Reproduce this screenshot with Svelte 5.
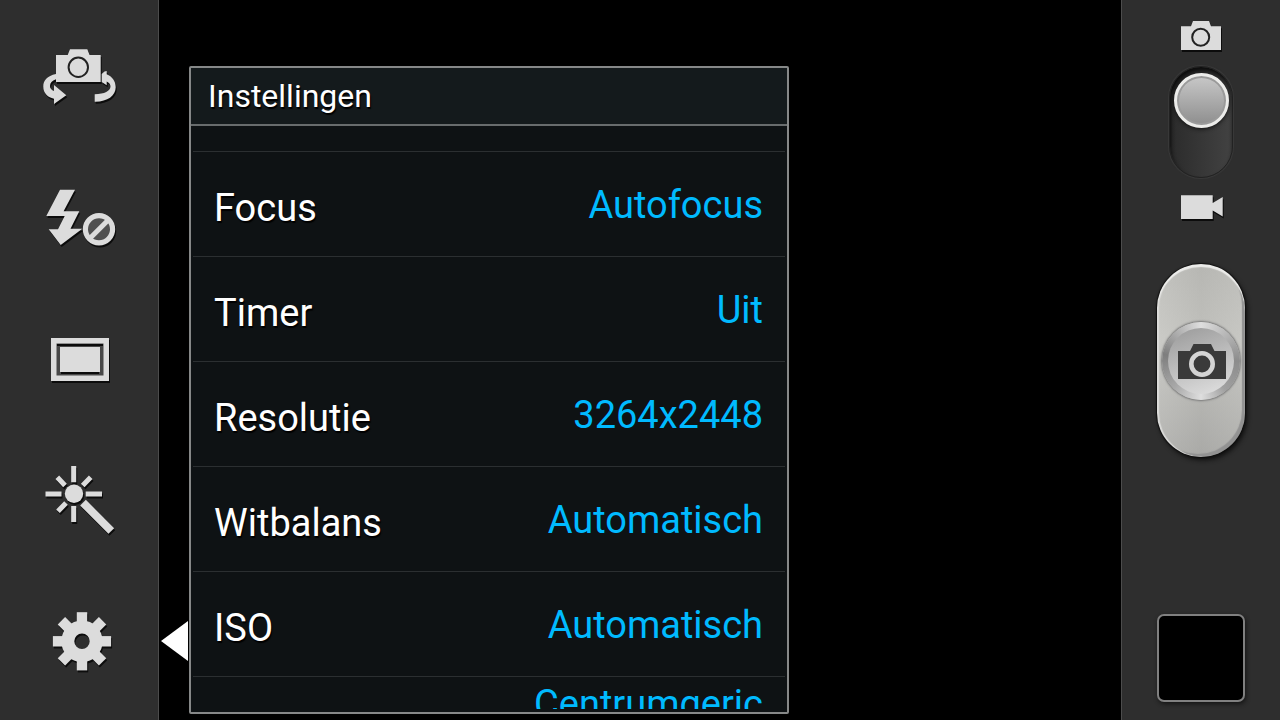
<script lang="ts">
  interface Setting {
    label: string
    value: string
  }

  const settings: Setting[] = [
    { label: 'Focus', value: 'Autofocus' },
    { label: 'Timer', value: 'Uit' },
    { label: 'Resolutie', value: '3264x2448' },
    { label: 'Witbalans', value: 'Automatisch' },
    { label: 'ISO', value: 'Automatisch' }
  ]

  const teeth = [0, 45, 90, 135, 180, 225, 270, 315]

  let video = $state(false)
</script>

<div class="camera">
  <nav class="toolbar">
    <!-- Switch camera -->
    <button class="tool">
      <svg class="icon" viewBox="0 0 80 80">
        <path d="M17 37C8 39 4.3 43.5 4.3 49.5C4.3 56.5 9 60.5 15 61.7V67L27.3 58.3L15 48V54C12.5 53 11 51.5 11 49C11 46 13 43.5 17 42.3Z" />
        <path d="M62.7 37L65.5 34.5L67.7 34V37.3C73 39.5 76.7 44 76.7 50.3C76.7 59 68 65 55.7 64.7V57.3C65.5 57 71.5 54 71.5 49.5C71.5 47.3 70 45.5 67.7 44.5V48.3L62.7 45Z" />
        <path d="M17 18H28.7L31 12.3H48.3L50.6 18H61.7V45H17Z" />
        <circle class="lens" cx="39.3" cy="30.3" r="9.7" />
      </svg>
    </button>

    <!-- Flash off -->
    <button class="tool">
      <svg class="icon" viewBox="0 0 80 80">
        <path d="M21 11.7H36L24.6 33.3H40.3L31.5 50.7H43.3L21.7 67L9.7 51.3H19L25.7 38H7.3Z" />
        <circle cx="60" cy="51.3" r="13.6" fill="#505050" stroke="#dcdcdc" stroke-width="5.2" />
        <path d="M51 60.3L69 42.3" stroke="#dcdcdc" stroke-width="5" />
      </svg>
    </button>

    <!-- Shooting mode -->
    <button class="tool">
      <svg class="icon" viewBox="0 0 80 80">
        <rect x="17" y="23" width="48" height="33" fill="#484848" />
        <path d="M18 25H64M22 53H60" stroke="#0c0c0c" stroke-width="2" />
        <path fill-rule="evenodd" d="M12 18H70V61H12ZM17.5 23.5V55.5H64.5V23.5Z" />
        <rect x="21" y="27" width="40" height="25" />
      </svg>
    </button>

    <!-- Effects -->
    <button class="tool">
      <svg class="icon" viewBox="0 0 80 80">
        <circle cx="35" cy="31.7" r="9.2" />
        <g stroke="#dcdcdc" stroke-width="5">
          <path d="M34.7 4V20.3M34.7 44V60M6.5 32H22.5M46.7 32H63" />
          <path d="M18.3 15.3L26 23.5M51.7 15.3L43.7 23.5M19 49.3L27 41" />
          <path d="M44 40.7L72.3 69" stroke-width="8" />
        </g>
      </svg>
    </button>

    <!-- Settings -->
    <button class="tool">
      <svg class="icon" viewBox="0 0 80 80">
        <circle cx="43" cy="38.3" r="14.2" fill="none" stroke="#dcdcdc" stroke-width="13" />
        {#each teeth as angle}
          <rect x="37.8" y="9.2" width="10.4" height="12" transform="rotate({angle} 43 38.3)" />
        {/each}
      </svg>
    </button>
  </nav>

  <main class="viewfinder">
    <section class="panel">
      <h1>Instellingen</h1>
      <ul class="settings">
        <li class="tail"></li>
        {#each settings as setting}
          <li>
            <button class="setting">
              <span class="label">{setting.label}</span>
              <span class="value">{setting.value}</span>
            </button>
          </li>
        {/each}
        <li>
          <button class="setting">
            <span class="value two-line">Centrumgeric</span>
          </button>
        </li>
      </ul>
      <span class="pointer"></span>
    </section>
  </main>

  <aside class="controls">
    <label class="mode">
      <svg class="icon photo" viewBox="0 0 44 32">
        <path d="M2 6.3H12L14 1H30L32 6.3H42V30H2Z" />
        <circle class="lens" cx="21.7" cy="17.3" r="8.5" />
      </svg>
      <input type="checkbox" bind:checked={video} />
      <svg class="icon film" viewBox="0 0 44 28">
        <path d="M2 3.3H33.7V11L43.7 5V24.5L33.7 18.5V27H2Z" />
      </svg>
    </label>

    <button class="shutter">
      <span class="ring">
        <svg viewBox="0 0 50 38">
          <path fill="#3a3a3a" d="M2 9H14L17.5 2H35L38.5 9H50V37H2Z" />
          <circle cx="26" cy="22" r="10.7" fill="#3a3a3a" stroke="#d4d4d4" stroke-width="4.6" />
        </svg>
      </span>
    </button>

    <button class="thumbnail"></button>
  </aside>
</div>

<style>
  :global(body) {
    background: #000;
  }

  .camera {
    display: flex;
    height: 100vh;
    overflow: hidden;
    background: #000;
    font-family: Roboto, 'Liberation Sans', sans-serif;
  }

  button {
    padding: 0;
    border: 0;
    background: none;
    font: inherit;
    color: inherit;
    cursor: pointer;
  }

  svg {
    display: block;
  }

  .icon {
    fill: #dcdcdc;
    filter: drop-shadow(1px 2px 0 #0c0c0c);
  }

  .lens {
    fill: #dcdcdc;
    stroke: #222;
    stroke-width: 2;
  }

  .toolbar,
  .controls {
    box-sizing: border-box;
    flex: none;
    width: 159px;
    background: #2e2e2e;
  }

  .toolbar {
    display: flex;
    flex-direction: column;
    padding: 6px 0;
    border-right: 1px solid #4c4c4c;
  }

  .tool {
    display: flex;
    flex: 1;
    align-items: center;
    justify-content: center;
  }

  .tool .icon {
    width: 80px;
    height: 80px;
  }

  .viewfinder {
    display: flex;
    flex: 1;
    min-width: 0;
    padding: 66px 30px 6px;
  }

  .panel {
    position: relative;
    display: flex;
    flex-direction: column;
    box-sizing: border-box;
    width: 600px;
    max-width: 100%;
    border: 2px solid #868888;
    border-radius: 2px;
    background: #0e1214;
    color: #fff;
  }

  h1 {
    margin: 0;
    padding: 0 17px;
    border-bottom: 2px solid #686c6d;
    background: #141a1c;
    font-size: 32px;
    font-weight: 400;
    line-height: 56px;
    text-shadow: 1px 2px 1px #000;
  }

  .settings {
    flex: 1;
    min-height: 0;
    margin: 0 2px 3px;
    padding: 0;
    overflow: hidden;
    list-style: none;
  }

  li {
    box-sizing: border-box;
    height: 105px;
    border-bottom: 1px solid #2b2f31;
  }

  /* end of the row that is scrolled away above */
  .tail {
    height: 26px;
  }

  .setting {
    display: flex;
    align-items: center;
    justify-content: space-between;
    box-sizing: border-box;
    width: 100%;
    height: 100%;
    padding: 2px 22px 0 21px;
    font-size: 38px;
    line-height: 46px;
  }

  .label {
    padding-top: 6px;
    text-shadow: 1px 2px 1px #000;
  }

  .value {
    margin-left: auto;
    color: #00baff;
  }

  .two-line {
    height: 98px;
  }

  .pointer {
    position: absolute;
    bottom: 51px;
    left: -30px;
    border: 20px solid transparent;
    border-right: 27px solid #fff;
    border-left: 0;
  }

  .controls {
    display: flex;
    flex-direction: column;
    align-items: center;
    padding: 20px 0 18px;
    border-left: 1px solid #4c4c4c;
  }

  .mode {
    display: flex;
    flex-direction: column;
    align-items: center;
    gap: 14px;
  }

  .photo {
    width: 44px;
    height: 32px;
  }

  .film {
    width: 44px;
    height: 28px;
  }

  .mode input {
    appearance: none;
    display: flex;
    flex-direction: column;
    box-sizing: border-box;
    width: 64px;
    height: 112px;
    margin: 0;
    padding: 6px 4px;
    border: 1px solid #222;
    border-radius: 32px;
    background: linear-gradient(90deg, #2b2b2b, #424242);
    box-shadow: inset 1px 4px 4px #0c0c0c, 0 0 1px 1px #3a3a3a;
    cursor: pointer;
  }

  .mode input:checked {
    justify-content: flex-end;
  }

  .mode input::before {
    content: '';
    box-sizing: border-box;
    width: 55px;
    height: 55px;
    border: 3px solid #ececea;
    border-radius: 50%;
    background: linear-gradient(#c8c8c8, #8e8e8e);
    box-shadow: inset 0 0 0 2px #9a9a9a, 0 1px 4px #111;
  }

  .shutter {
    display: flex;
    align-items: center;
    justify-content: center;
    width: 88px;
    height: 193px;
    margin-top: 44px;
    border-radius: 44px;
    background: linear-gradient(90deg, #d0d0cc66, #b4b4b066 50%, #c8c8c466), linear-gradient(#b8b8b4, #c8c8c4 40%, #a2a2a0);
    box-shadow: inset 0 3px 1px #ececea, inset 2px 0 1px #dcdcda, inset -3px -3px 1px #929292, 2px 3px 5px #0c0c0c, 0 0 1px 1px #151515;
  }

  .ring {
    display: flex;
    align-items: center;
    justify-content: center;
    box-sizing: border-box;
    width: 78px;
    height: 78px;
    border: 6px solid transparent;
    border-radius: 50%;
    background:
      linear-gradient(160deg, #999, #e2e2e2) padding-box,
      conic-gradient(#dedede, #8c8c8c 90deg, #a0a0a0 140deg, #dedede 180deg, #a8a8a8 225deg, #7e7e7e 280deg, #dedede) border-box;
    box-shadow: 0 0 2px 1px #777;
  }

  .ring svg {
    width: 50px;
    height: 38px;
  }

  .thumbnail {
    width: 88px;
    height: 88px;
    margin-top: auto;
    border: 2px solid #808080;
    border-radius: 7px;
    background: #000;
    box-shadow: 1px 2px 4px #151515;
  }
</style>
